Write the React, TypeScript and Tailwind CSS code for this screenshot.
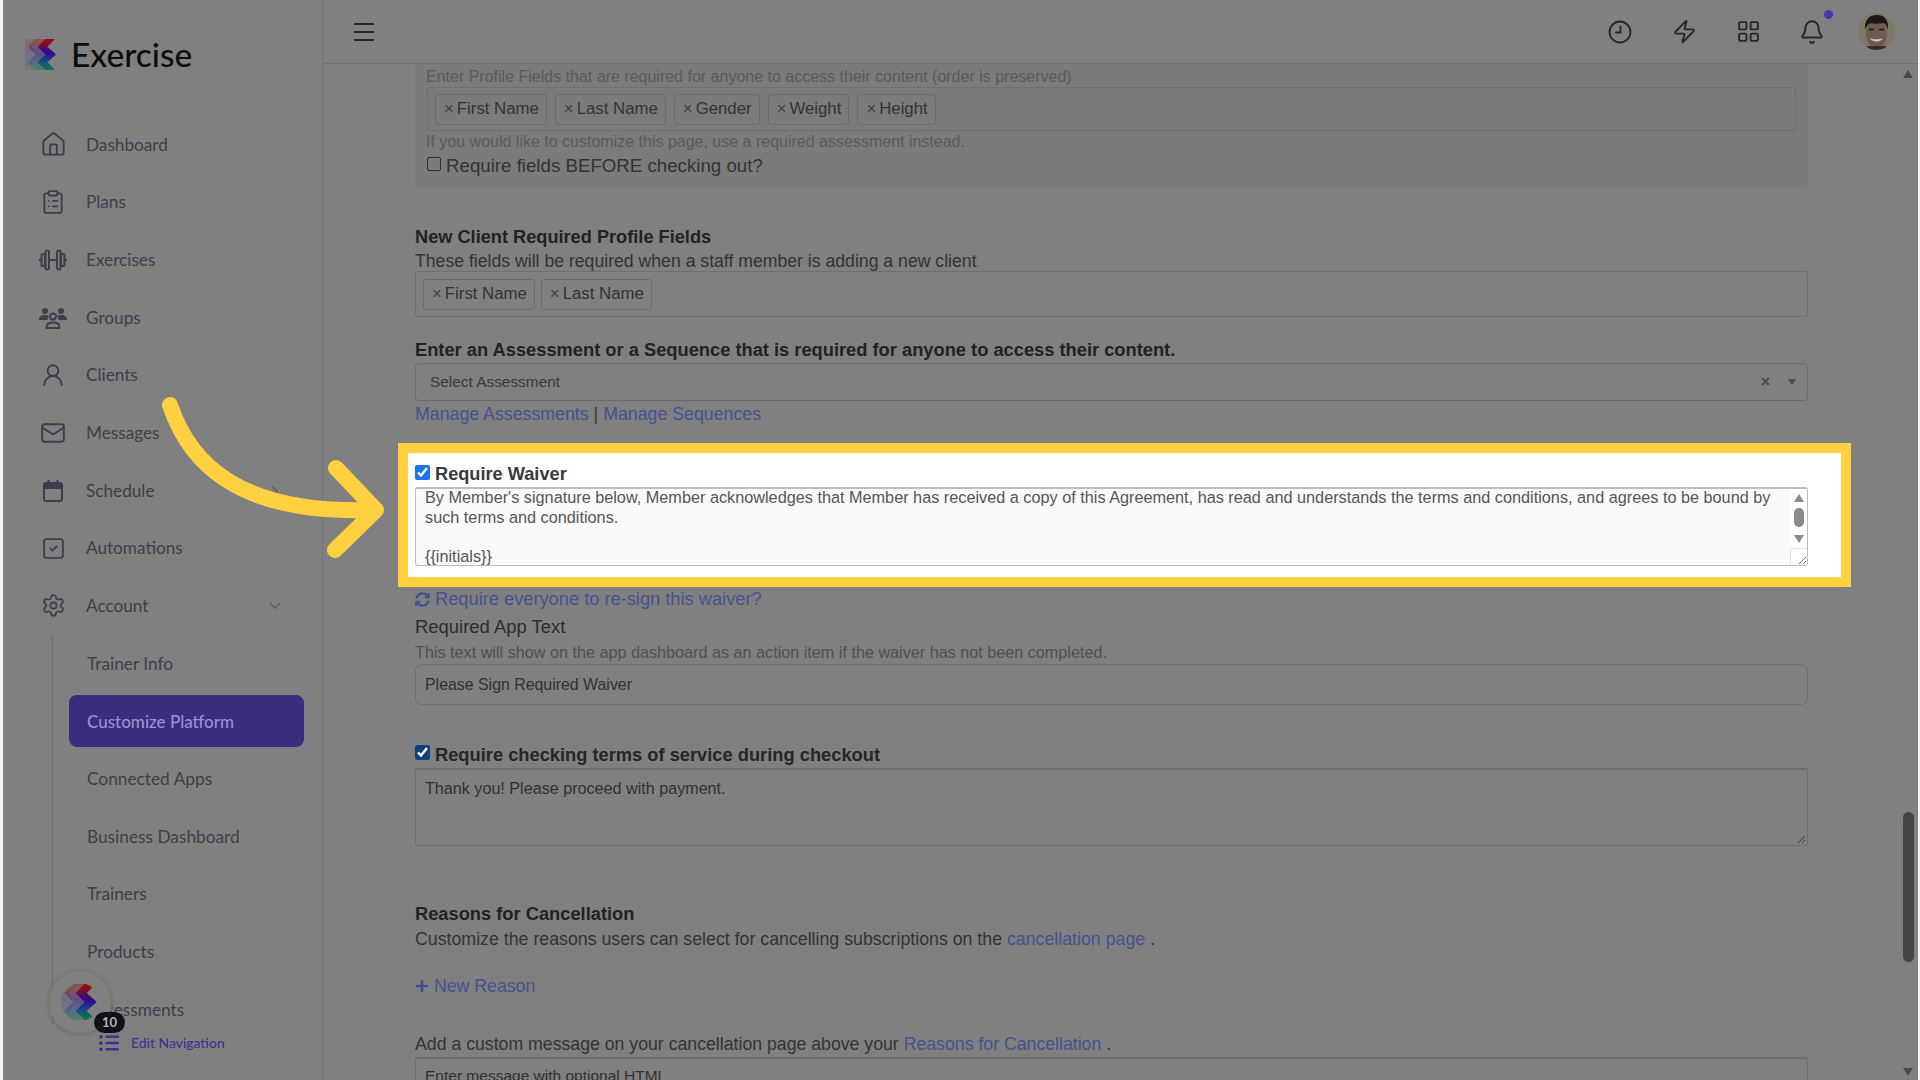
import React from "react";
import {
  House,
  ClipboardList,
  UserRound,
  Mail,
  SquareCheck,
  Settings,
  ChevronRight,
  ChevronDown,
  Zap,
  LayoutGrid,
  Bell,
} from "lucide-react";
import { FaSyncAlt, FaPlus, FaListUl } from "react-icons/fa";

const Dumbbell = () => (
  <svg width="30" height="24" viewBox="0 0 30 24" fill="none" stroke="currentColor" strokeWidth="2" strokeLinejoin="round">
    <path d="M1 12h2M27 12h2M11 12h8" />
    <rect x="3.5" y="6" width="3.5" height="12" rx="1.6" />
    <rect x="7.5" y="2.5" width="3.5" height="19" rx="1.7" />
    <rect x="19" y="2.5" width="3.5" height="19" rx="1.7" />
    <rect x="23" y="6" width="3.5" height="12" rx="1.6" />
  </svg>
);

const Groups = () => (
  <svg width="30" height="24" viewBox="0 0 30 24" fill="none">
    <circle cx="7" cy="5" r="3" fill="currentColor" />
    <circle cx="23" cy="5" r="3" fill="currentColor" />
    <path d="M1 14c0-3 2-5 6-5 2 0 3 .4 4 1.2-1 1-1.5 2.200-1.500 3.800z" fill="currentColor" />
    <path d="M29 14c0-3-2-5-6-5-2 0-3 .4-4 1.200 1 1 1.500 2.200 1.500 3.800z" fill="currentColor" />
    <circle cx="15" cy="10.500" r="3" stroke="currentColor" strokeWidth="1.800" />
    <path d="M8.500 22v-1c0-3 2.500-4.500 6.500-4.500s6.500 1.500 6.500 4.500v1z" stroke="currentColor" strokeWidth="1.800" strokeLinejoin="round" />
  </svg>
);

const CalendarIcon = () => (
  <svg width="22" height="24" viewBox="0 0 22 24" fill="none" stroke="currentColor" strokeWidth="2">
    <rect x="2" y="4" width="18" height="18" rx="2" />
    <path d="M2 6h18v3H2z" fill="currentColor" />
    <path d="M6.500 1v4M15.500 1v4" />
  </svg>
);

const ClockIcon = () => (
  <svg width="24" height="24" viewBox="0 0 24 24" fill="none" stroke="currentColor" strokeWidth="1.800" strokeLinecap="round" strokeLinejoin="round">
    <circle cx="12" cy="12" r="10.500" />
    <path d="M12.500 6.500v6h-4.500" />
  </svg>
);

const Logo = ({ id, size }: { id: string; size: number }) => (
  <svg width={size} height={size} viewBox="0 0 34 32">
    <defs>
      <linearGradient id={id} x1="0" y1="0" x2="0" y2="1">
        <stop offset="0.1" stopColor="#8e0e0e" />
        <stop offset="0.45" stopColor="#2b0a96" />
        <stop offset="0.75" stopColor="#17507e" />
        <stop offset="1" stopColor="#0a7a48" />
      </linearGradient>
    </defs>
    <path d="M10 0H1a1 1 0 0 0-1 1v30a1 1 0 0 0 1 1h9l-3-8 4-8-4-8z" fill={`url(#${id})`} opacity="0.16" />
    <path d="M21 0H11L3 8l8 8-8 8 8 8h10l-8-8 8-8-8-8z" fill={`url(#${id})`} opacity="0.4" />
    <path d="M31 0H21l-8 8 8 8-8 8 8 8h10l-8-8 9-8-9-8z" fill={`url(#${id})`} />
  </svg>
);

const Avatar = () => (
  <svg width="37" height="37" viewBox="0 0 37 37">
    <defs>
      <clipPath id="avatarClip">
        <circle cx="18.500" cy="18.500" r="18.500" />
      </clipPath>
    </defs>
    <g clipPath="url(#avatarClip)">
      <rect width="37" height="37" fill="#7f7a64" />
      <ellipse cx="18.500" cy="21" rx="10.500" ry="14" fill="#6f5a50" />
      <path d="M7 17C6 6 12 2 19 2s12 4 11 15c-1-4-3-7-5-7-4 1-9 1-12 0-3 1-5 3-6 7z" fill="#1d1715" />
      <path d="M11 16.500h5M21 16.500h5" stroke="#1d1715" strokeWidth="1.600" />
      <path d="M12 25.500c3 4 10 4 13 0-3 1-10 1-13 0z" fill="#cfc8c0" />
      <rect x="9" y="33" width="19" height="4" fill="#3b2a26" />
    </g>
  </svg>
);

const mainNav: { label: string; icon: React.ReactNode; chevron?: "right" | "down" }[] = [
  { label: "Dashboard", icon: <House size={27} strokeWidth={1.7} /> },
  { label: "Plans", icon: <ClipboardList size={26} strokeWidth={1.7} /> },
  { label: "Exercises", icon: <Dumbbell /> },
  { label: "Groups", icon: <Groups /> },
  { label: "Clients", icon: <UserRound size={26} strokeWidth={1.8} /> },
  { label: "Messages", icon: <Mail size={26} strokeWidth={1.8} /> },
  { label: "Schedule", icon: <CalendarIcon />, chevron: "right" },
  { label: "Automations", icon: <SquareCheck size={25} strokeWidth={1.8} /> },
  { label: "Account", icon: <Settings size={25} strokeWidth={1.7} />, chevron: "down" },
];

const subNav = ["Trainer Info", "Customize Platform", "Connected Apps", "Business Dashboard", "Trainers", "Products", "Assessments"];

const Tag = ({ label }: { label: string }) => (
  <span className="flex h-[31px] items-center gap-[3px] rounded-[3px] border border-[#6c6c6c] pl-[8px] pr-[7px] text-[16.800px] text-[#333333]">
    <span className="text-[#404040]">×</span>
    {label}
  </span>
);

const UpArrow = ({ className }: { className: string }) => (
  <span className={`h-0 w-0 border-x-[5.500px] border-b-[8px] border-x-transparent ${className}`} />
);

const DownArrow = ({ className }: { className: string }) => (
  <span className={`h-0 w-0 border-x-[5.500px] border-t-[8px] border-x-transparent ${className}`} />
);

const Resizer = ({ color }: { color: string }) => (
  <svg width="9" height="9" viewBox="0 0 9 9" stroke={color} strokeWidth="1">
    <path d="M1 8l7-7M5 8l3-3" />
  </svg>
);

export default function App() {
  return (
    <div className="relative flex h-screen w-full overflow-hidden bg-[#808080] font-['Liberation_Sans',sans-serif]">
      <div className="w-[3px] shrink-0 bg-[#f4f4f4]" />

      {/* sidebar */}
      <aside className="relative w-[320px] shrink-0 overflow-hidden border-r border-[#737373] font-['Lato',sans-serif] text-[#3b3f4c]">
        <div className="flex h-[115.600px] items-start pl-[22px] pt-[38px]">
          <Logo id="logoTop" size={33} />
          <span className="ml-[13px] text-[33.500px] font-medium leading-[33px] text-[#0d0d0d]">Exercise</span>
        </div>
        <nav>
          {mainNav.map((item) => (
            <div key={item.label} className="flex h-[57.700px] items-center">
              <span className="ml-[30px] flex w-[40px] justify-center">{item.icon}</span>
              <span className="ml-[13px] text-[17.200px]">{item.label}</span>
              {item.chevron === "right" && <ChevronRight size={16} className="ml-auto mr-[39px] text-[#5c5c5c]" />}
              {item.chevron === "down" && <ChevronDown size={18} className="ml-auto mr-[38px] text-[#5c5c5c]" />}
            </div>
          ))}
        </nav>
        <div className="ml-[49px] h-[389px] border-l border-[#6e6e6e] pl-[16px]">
          {subNav.map((label) => (
            <div
              key={label}
              className={`flex h-[57.700px] items-center ${label === "Customize Platform" ? "" : "pl-[18px]"}`}
            >
              {label === "Customize Platform" ? (
                <span className="flex h-[52px] w-[235px] items-center rounded-[8px] bg-[#3b2c80] pl-[18px] text-[17px] font-medium text-[#9a93cf]">
                  {label}
                </span>
              ) : (
                <span className="text-[17.300px]">{label}</span>
              )}
            </div>
          ))}
        </div>

        {/* floating launcher */}
        <div className="absolute left-[45px] top-[970px] flex h-[64px] w-[64px] items-center justify-center rounded-full border border-[#787878] bg-[#808080] shadow-[0_1px_4px_rgba(0,0,0,0.15)]">
          <div className="overflow-hidden rounded-full">
            <Logo id="logoFloat" size={38} />
          </div>
        </div>
        <div className="absolute left-[96px] top-[1033px] flex items-center gap-[12px] text-[13.900px] font-medium text-[#41328f]">
          <FaListUl size={20} />
          Edit Navigation
        </div>
        <span className="absolute left-[91px] top-[1012px] flex h-[21px] w-[31px] items-center justify-center rounded-full bg-[#101218] text-[13px] font-bold text-[#b5b5b5]">
          10
        </span>
      </aside>

      <div className="flex min-w-0 flex-1 flex-col">
        {/* top bar */}
        <header className="flex h-[64px] shrink-0 items-center border-b border-[#707070] pr-[10px] text-[#23262d]">
          <span className="ml-[31px] flex h-[18px] w-[20px] flex-col justify-between">
            <span className="h-[2px] bg-[#23262d]" />
            <span className="h-[2px] bg-[#23262d]" />
            <span className="h-[2px] bg-[#23262d]" />
          </span>
          <div className="ml-auto flex items-center">
            <span className="flex w-[64px] justify-center">
              <ClockIcon />
            </span>
            <span className="flex w-[64px] justify-center">
              <Zap size={25} strokeWidth={1.8} />
            </span>
            <span className="flex w-[64px] justify-center">
              <LayoutGrid size={25} strokeWidth={1.8} />
            </span>
            <span className="relative flex w-[64px] justify-center">
              <Bell size={26} strokeWidth={1.8} />
              <span className="absolute left-[44px] top-[-9px] h-[9px] w-[9px] rounded-full bg-[#4a35b0]" />
            </span>
            <span className="flex w-[64px] justify-center">
              <Avatar />
            </span>
          </div>
        </header>

        <div className="flex min-h-0 flex-1">
          {/* page content */}
          <main className="w-[1485px] shrink-0 pl-[92px] text-[#2c2c2c]">
            <div className="w-[1393px]">
              <div className="rounded-b-[5px] bg-[#7b7b7b] pb-[10px] pl-[12px] pr-[12px] pt-[3px]">
                <p className="-ml-[1px] text-[16px] leading-[20px] text-[#5a5a5a]">
                  Enter Profile Fields that are required for anyone to access their content (order is preserved)
                </p>
                <div className="flex h-[44px] items-center gap-[8px] rounded-[3px] border border-[#6f6f6f] pl-[7px]">
                  <Tag label="First Name" />
                  <Tag label="Last Name" />
                  <Tag label="Gender" />
                  <Tag label="Weight" />
                  <Tag label="Height" />
                </div>
                <p className="-ml-[1px] mt-[1px] text-[16px] leading-[20px] text-[#5a5a5a]">
                  If you would like to customize this page, use a required assessment instead.
                </p>
                <label className="mt-[2px] flex h-[24px] items-center text-[18.700px] leading-[24px] text-[#333333]">
                  <span className="mb-[5px] mr-[5px] h-[14px] w-[14px] rounded-[2px] border border-[#2e2e2e]" />
                  Require fields BEFORE checking out?
                </label>
              </div>

              <h3 className="mt-[37px] text-[18.200px] font-bold leading-[24px] text-[#222222]">New Client Required Profile Fields</h3>
              <p className="mt-[2px] text-[17.650px] leading-[20px] text-[#333333]">These fields will be required when a staff member is adding a new client</p>
              <div className="flex h-[46px] items-center gap-[6px] rounded-[3px] border border-[#6f6f6f] pl-[7px]">
                <Tag label="First Name" />
                <Tag label="Last Name" />
              </div>

              <h3 className="mt-[21px] text-[18.300px] font-bold leading-[24px] text-[#222222]">
                Enter an Assessment or a Sequence that is required for anyone to access their content.
              </h3>
              <div className="mt-[1px] flex h-[38px] items-center rounded-[4px] border border-[#6c6c6c] pl-[14px] pr-[11px] text-[15.400px] text-[#3a3a3a]">
                Select Assessment
                <span className="ml-auto mr-[18px] text-[16px] font-bold leading-none text-[#4a4a4a]">×</span>
                <span className="mb-[1px] h-0 w-0 border-x-[4.500px] border-t-[6px] border-x-transparent border-t-[#4a4a4a]" />
              </div>
              <p className="mt-[2px] text-[17.750px] leading-[22px] text-[#45528f]">
                Manage Assessments <span className="text-[#333333]">|</span> Manage Sequences
              </p>

              {/* highlighted waiver block */}
              <div className="-ml-[17px] mt-[18px] h-[144px] w-[1453px] border-[10px] border-[#ffd040] bg-white pl-[7px] pt-[10px]">
                <label className="flex h-[22px] items-center text-[18.200px] font-bold leading-[22px] text-[#3a3a3a]">
                  <input type="checkbox" defaultChecked readOnly className="mb-[4px] mr-[5px] h-[15px] w-[15px] accent-[#1a73e8]" />
                  Require Waiver
                </label>
                <div className="mt-[2px] flex h-[79px] w-[1393px] overflow-hidden rounded-[3px] border border-t-2 border-[#bdbdbd] bg-[#fafafa]">
                  <div className="-mt-[1px] min-w-0 flex-1 pl-[9px] pr-[10px] text-[16.250px] leading-[19.500px] text-[#555555]">
                    By Member's signature below, Member acknowledges that Member has received a copy of this Agreement, has read and understands the terms and conditions, and agrees to be bound by such terms and conditions.
                    <br />
                    <br />
                    {"{{initials}}"}
                  </div>
                  <div className="flex w-[17px] shrink-0 flex-col items-center bg-white pt-[5px]">
                    <UpArrow className="border-b-[#8a8a8a]" />
                    <span className="mt-[6px] h-[19px] w-[10px] shrink-0 rounded-full bg-[#8a8a8a]" />
                    <DownArrow className="mt-[8px] border-t-[#8a8a8a]" />
                    <span className="mt-auto flex h-[17px] w-[17px] shrink-0 items-end justify-end border-l border-t border-[#e4e4e4]">
                      <Resizer color="#777777" />
                    </span>
                  </div>
                </div>
              </div>

              <p className="mt-[1px] flex items-center gap-[5px] text-[18.250px] leading-[22px] text-[#45528f]">
                <FaSyncAlt size={15} className="text-[#3c4f8f]" />
                Require everyone to re-sign this waiver?
              </p>
              <h4 className="mt-[5px] text-[18.450px] leading-[24px] text-[#2c2c2c]">Required App Text</h4>
              <p className="mt-[3px] text-[16.200px] leading-[20px] text-[#505050]">
                This text will show on the app dashboard as an action item if the waiver has not been completed.
              </p>
              <div className="mt-[2px] flex h-[41px] items-center rounded-[7px] border border-[#6f6f6f] pl-[9px] pt-[1px] text-[15.900px] text-[#303030]">
                Please Sign Required Waiver
              </div>

              <label className="mt-[38px] flex h-[24px] items-center text-[18.300px] font-bold leading-[24px] text-[#262626]">
                <input type="checkbox" defaultChecked readOnly className="mb-[6px] mr-[5px] h-[15px] w-[15px] accent-[#0f3f7f]" />
                Require checking terms of service during checkout
              </label>
              <div className="relative mt-[1px] h-[78px] rounded-[3px] border border-t-2 border-[#6f6f6f] pl-[9px] pt-[6px] text-[16.150px] leading-[24px] text-[#303030]">
                Thank you! Please proceed with payment.
                <span className="absolute bottom-[1px] right-[1px] flex">
                  <Resizer color="#3c3c3c" />
                </span>
              </div>

              <h3 className="mt-[56px] text-[18.300px] font-bold leading-[24px] text-[#222222]">Reasons for Cancellation</h3>
              <p className="mt-[2px] text-[17.750px] leading-[22px] text-[#333333]">
                Customize the reasons users can select for cancelling subscriptions on the <span className="text-[#45528f]">cancellation page</span> .
              </p>
              <p className="mt-[24px] flex items-center gap-[5px] text-[17.700px] leading-[24px] text-[#45528f]">
                <FaPlus size={14} className="text-[#3c4f8f]" />
                New Reason
              </p>
              <p className="mt-[35px] text-[17.700px] leading-[22px] text-[#333333]">
                Add a custom message on your cancellation page above your <span className="text-[#45528f]">Reasons for Cancellation</span> .
              </p>
              <div className="mt-[2px] h-[40px] rounded-[3px] border border-t-2 border-[#6f6f6f] pl-[9px] pt-[5px] text-[15.500px] leading-[24px] text-[#303030]">
                Enter message with optional HTML
              </div>
            </div>
          </main>

          {/* page scrollbar */}
          <div className="ml-auto flex w-[20px] shrink-0 flex-col items-center pb-[4px] pt-[6px]">
            <UpArrow className="border-b-[#4a4a4a]" />
            <span className="mb-[106px] mt-auto h-[150px] w-[11px] rounded-full bg-[#444444]" />
            <DownArrow className="border-t-[#4a4a4a]" />
          </div>
        </div>
      </div>

      <div className="w-[2px] shrink-0 bg-[#f4f4f4]" />

      {/* callout arrow */}
      <svg className="pointer-events-none absolute left-0 top-0" width="400" height="570" fill="none" stroke="#ffd040" strokeWidth="16" strokeLinecap="round" strokeLinejoin="round">
        <path d="M170 405C190 465 240 514 372 510" />
        <path d="M336 468L376 510L335 550" />
      </svg>
    </div>
  );
}
